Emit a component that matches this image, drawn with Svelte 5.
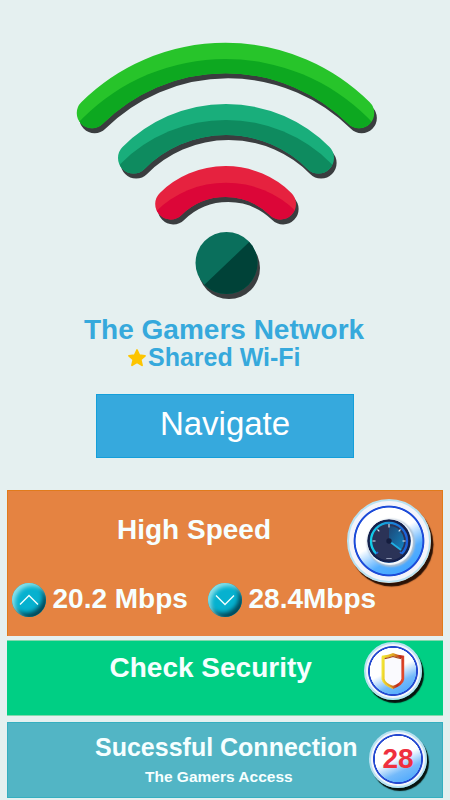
<script>
  const network = { name: 'The Gamers Network', type: 'Shared Wi-Fi' }

  const arcs = [
    { id: 'outer', d: 'M92 113A189.5 189.5 0 0 1 359 113', width: 30.5, light: '#27c42a', dark: '#0da820', cx: 225.5, cy: 260.7, r: 201.7 },
    { id: 'middle', d: 'M133.5 158A130.4 130.4 0 0 1 318.5 158', width: 31, light: '#19ae7b', dark: '#0e8b5f', cx: 226, cy: 269, r: 149 },
    { id: 'inner', d: 'M170.7 204A78.5 78.5 0 0 1 280.5 204', width: 31, light: '#e6223f', dark: '#dc0638', cx: 226, cy: 282.7, r: 100 }
  ]

  const speeds = [
    { value: '20.2 Mbps', icon: 'M8 21.5L17 12.5L26 21.5' },
    { value: '28.4Mbps', icon: 'M8 12.5L17 21.5L26 12.5' }
  ]
</script>

<main>
  <svg class="wifi" width="450" height="312" viewBox="0 0 450 312" fill="none">
    <defs>
      {#each arcs as arc}
        <clipPath id={arc.id}><circle cx={arc.cx} cy={arc.cy} r={arc.r} /></clipPath>
      {/each}
      <clipPath id="dot"><path d="M190 298.5L264 228V310H190z" /></clipPath>
    </defs>
    {#each arcs as arc}
      <g stroke-width={arc.width} stroke-linecap="round">
        <path d={arc.d} stroke="#3a3d3f" transform="translate(2.6 5)" />
        <path d={arc.d} stroke={arc.light} />
        <g clip-path="url(#{arc.id})"><path d={arc.d} stroke={arc.dark} /></g>
      </g>
    {/each}
    <circle cx="229" cy="268" r="31" fill="#3a3d3f" />
    <circle cx="226.5" cy="263" r="31" fill="#0a6f5c" />
    <circle cx="226.5" cy="263" r="31" fill="#004238" clip-path="url(#dot)" />
  </svg>

  <h1>{network.name}</h1>
  <div class="type">
    <svg width="18" height="18" viewBox="0 0 18 18">
      <path d="M9 1L11.3 6.2L17 6.8L12.7 10.6L14 16.3L9 13.3L4 16.3L5.3 10.6L1 6.8L6.7 6.2z" fill="#fdc500" stroke="#fdc500" stroke-width="1.8" stroke-linejoin="round" />
    </svg>
    <span>{network.type}</span>
  </div>

  <button class="navigate">Navigate</button>

  <section class="card speed">
    <h2>High Speed</h2>
    <div class="speeds">
      {#each speeds as speed}
        <div class="rate">
          <span class="knob">
            <svg width="34" height="34" viewBox="0 0 34 34" fill="none">
              <path d={speed.icon} stroke="#f2ffff" stroke-width="1.4" />
            </svg>
          </span>
          <span class="value">{speed.value}</span>
        </div>
      {/each}
    </div>
    <div class="badge large">
      <svg width="44" height="44" viewBox="-22 -22 44 44" fill="none">
        <defs>
          <linearGradient id="dial" x1="0" x2="1">
            <stop offset="0" stop-color="#12d0ea" />
            <stop offset=".5" stop-color="#188fd8" />
            <stop offset="1" stop-color="#1c5fdc" />
          </linearGradient>
          <linearGradient id="sweep" x1="0" x2="1" y1="0" y2="1">
            <stop offset="0" stop-color="#1d4675" />
            <stop offset="1" stop-color="#1384c0" />
          </linearGradient>
        </defs>
        <circle r="21.8" fill="#14204c" />
        <circle r="19.5" fill="#2b3357" />
        <path d="M0 0V-15A15 15 0 0 1 12 9z" fill="url(#sweep)" />
        <path d="M-12.7 12.7A18 18 0 1 1 12.7 12.7" stroke="url(#dial)" stroke-width="2.3" />
        <path d="M-12.7 12.7L-11 11M12.7 12.7L11 11" stroke="#2463d8" stroke-width="1.6" />
        <path d="M0 -17V-13.5M-16.5 0H-13.5M16.5 0H13.5M-11.5 -11.5L-9.7 -9.7M11.5 -11.5L9.7 -9.7" stroke="#dce9f5" stroke-width="1.1" />
        <path d="M0 0L12 9" stroke="#20b0e4" stroke-width="1.7" />
        <circle r="2.7" fill="#151d3e" />
        <path d="M-2.7 17.5H2.7" stroke="#8f98b4" stroke-width="1.2" />
      </svg>
    </div>
  </section>

  <section class="card security">
    <h2>Check Security</h2>
    <div class="badge">
      <svg width="24" height="38" viewBox="0 0 24 38" fill="none">
        <defs>
          <linearGradient id="shield" x1="0" x2="1" y1=".3" y2=".5">
            <stop offset="0" stop-color="#f0df2c" />
            <stop offset=".45" stop-color="#dda023" />
            <stop offset=".8" stop-color="#bd2a1b" />
            <stop offset="1" stop-color="#e0482a" />
          </linearGradient>
        </defs>
        <path d="M2.2 5Q7.5 4.5 12 2.6Q16.5 4.5 21.8 5V27Q21 32 12 35.4Q3 32 2.2 27z" fill="#fafafe" stroke="url(#shield)" stroke-width="2.8" />
        <path d="M1 4.8V27.5Q3 33 12 36.6" stroke="#f3e64b" stroke-width=".7" />
        <path d="M3.6 6.6Q8 6.2 12 4.6Q16 6.2 20.4 6.6" stroke="#a7471c" stroke-width="1.1" />
      </svg>
    </div>
  </section>

  <section class="card connection">
    <h2>Sucessful Connection</h2>
    <p>The Gamers Access</p>
    <div class="badge count">28</div>
  </section>
</main>

<style>
  :global(body) {
    background: #e5f0f0;
  }

  main {
    width: 450px;
    height: 800px;
    overflow: hidden;
    display: flex;
    flex-direction: column;
    background: #e5f0f0;
    font-family: "Liberation Sans", Arial, sans-serif;
  }

  svg {
    display: block;
    flex: none;
  }

  h1,
  h2,
  p {
    margin: 0;
    font-weight: bold;
    white-space: nowrap;
  }

  h1 {
    padding: 1px 0 0 84px;
    font-size: 28px;
    line-height: 33px;
    color: #36a9dc;
  }

  .type {
    display: flex;
    align-items: center;
    padding-left: 128px;
    gap: 2px;
    height: 23px;
    font-size: 25px;
    font-weight: bold;
    line-height: 23px;
    color: #36a9dc;
  }

  .navigate {
    width: 258px;
    height: 64px;
    margin: 25px 0 0 96px;
    padding: 0 0 5px;
    flex: none;
    border: 1px solid #149fda;
    background: #36a9dd;
    color: #fff;
    font-family: inherit;
    font-size: 33px;
  }

  .card {
    position: relative;
    box-sizing: border-box;
    flex: none;
    width: 436px;
    margin-left: 7px;
    color: #f6ffff;
  }

  .card h2 {
    font-size: 28px;
    line-height: 40px;
  }

  .speed {
    height: 145.5px;
    margin-top: 32px;
    padding-top: 19px;
    background: #e58341;
    border: 1px solid #e17b1b;
    border-width: 1px 1px 0;
  }

  .speed h2 {
    padding-left: 109px;
  }

  .speeds {
    display: grid;
    grid-template-columns: 196px 1fr;
    margin-top: 33px;
    padding-left: 3.5px;
  }

  .rate {
    display: flex;
    gap: 7px;
  }

  .knob {
    width: 34px;
    height: 34px;
    border-radius: 50%;
    background: #06b1cf;
    box-shadow: inset 3px 3px 4px #8ce0e9, inset -3px -4px 4px #034a5b;
  }

  .value {
    font-size: 28px;
    font-weight: bold;
    line-height: 31px;
  }

  .security {
    height: 76px;
    margin-top: 4px;
    padding: 7px 0 0 102.5px;
    background: #00cf84;
    border: 1px solid #83d9ae;
    border-width: 1px 0;
  }

  .connection {
    height: 76px;
    margin-top: 6.5px;
    padding: 9px 0 0 87px;
    background: #52b5c5;
    border: 1px solid #35afc0;
  }

  .connection h2 {
    font-size: 25px;
    line-height: 30px;
  }

  .connection p {
    padding-left: 50px;
    font-size: 15.5px;
    line-height: 29px;
  }

  .badge {
    position: absolute;
    top: 1px;
    right: 21px;
    display: flex;
    align-items: center;
    justify-content: center;
    box-sizing: border-box;
    width: 58px;
    height: 58px;
    border: 2px solid #b9e2f2;
    border-radius: 50%;
    background: radial-gradient(circle closest-side, transparent 85%, #2449d0 87%, #2449d0 91%, #f4f5fb 94%),
      linear-gradient(155deg, #fff 48%, #74bafa 68%, #309bff);
    box-shadow: 2px 3px 1px #06140f;
  }

  .large {
    top: 7.5px;
    right: 11px;
    width: 84px;
    height: 84px;
    background: radial-gradient(circle closest-side, transparent 82.5%, #1d4bd8 84.5%, #1d4bd8 87.5%, #f4f4fa 89.5%),
      linear-gradient(150deg, #fff 46%, #54aeff 66%, #309bff);
    box-shadow: 2.5px 3.5px 1px #2b1206;
  }

  .large svg {
    border-radius: 50%;
    box-shadow: 1px 1px 1px 1px #f7fafe, 2px 2px 2px 2px #a7bcd0;
  }

  .count {
    top: 7px;
    right: 15px;
    font-size: 28px;
    font-weight: bold;
    color: #ef303e;
  }
</style>
